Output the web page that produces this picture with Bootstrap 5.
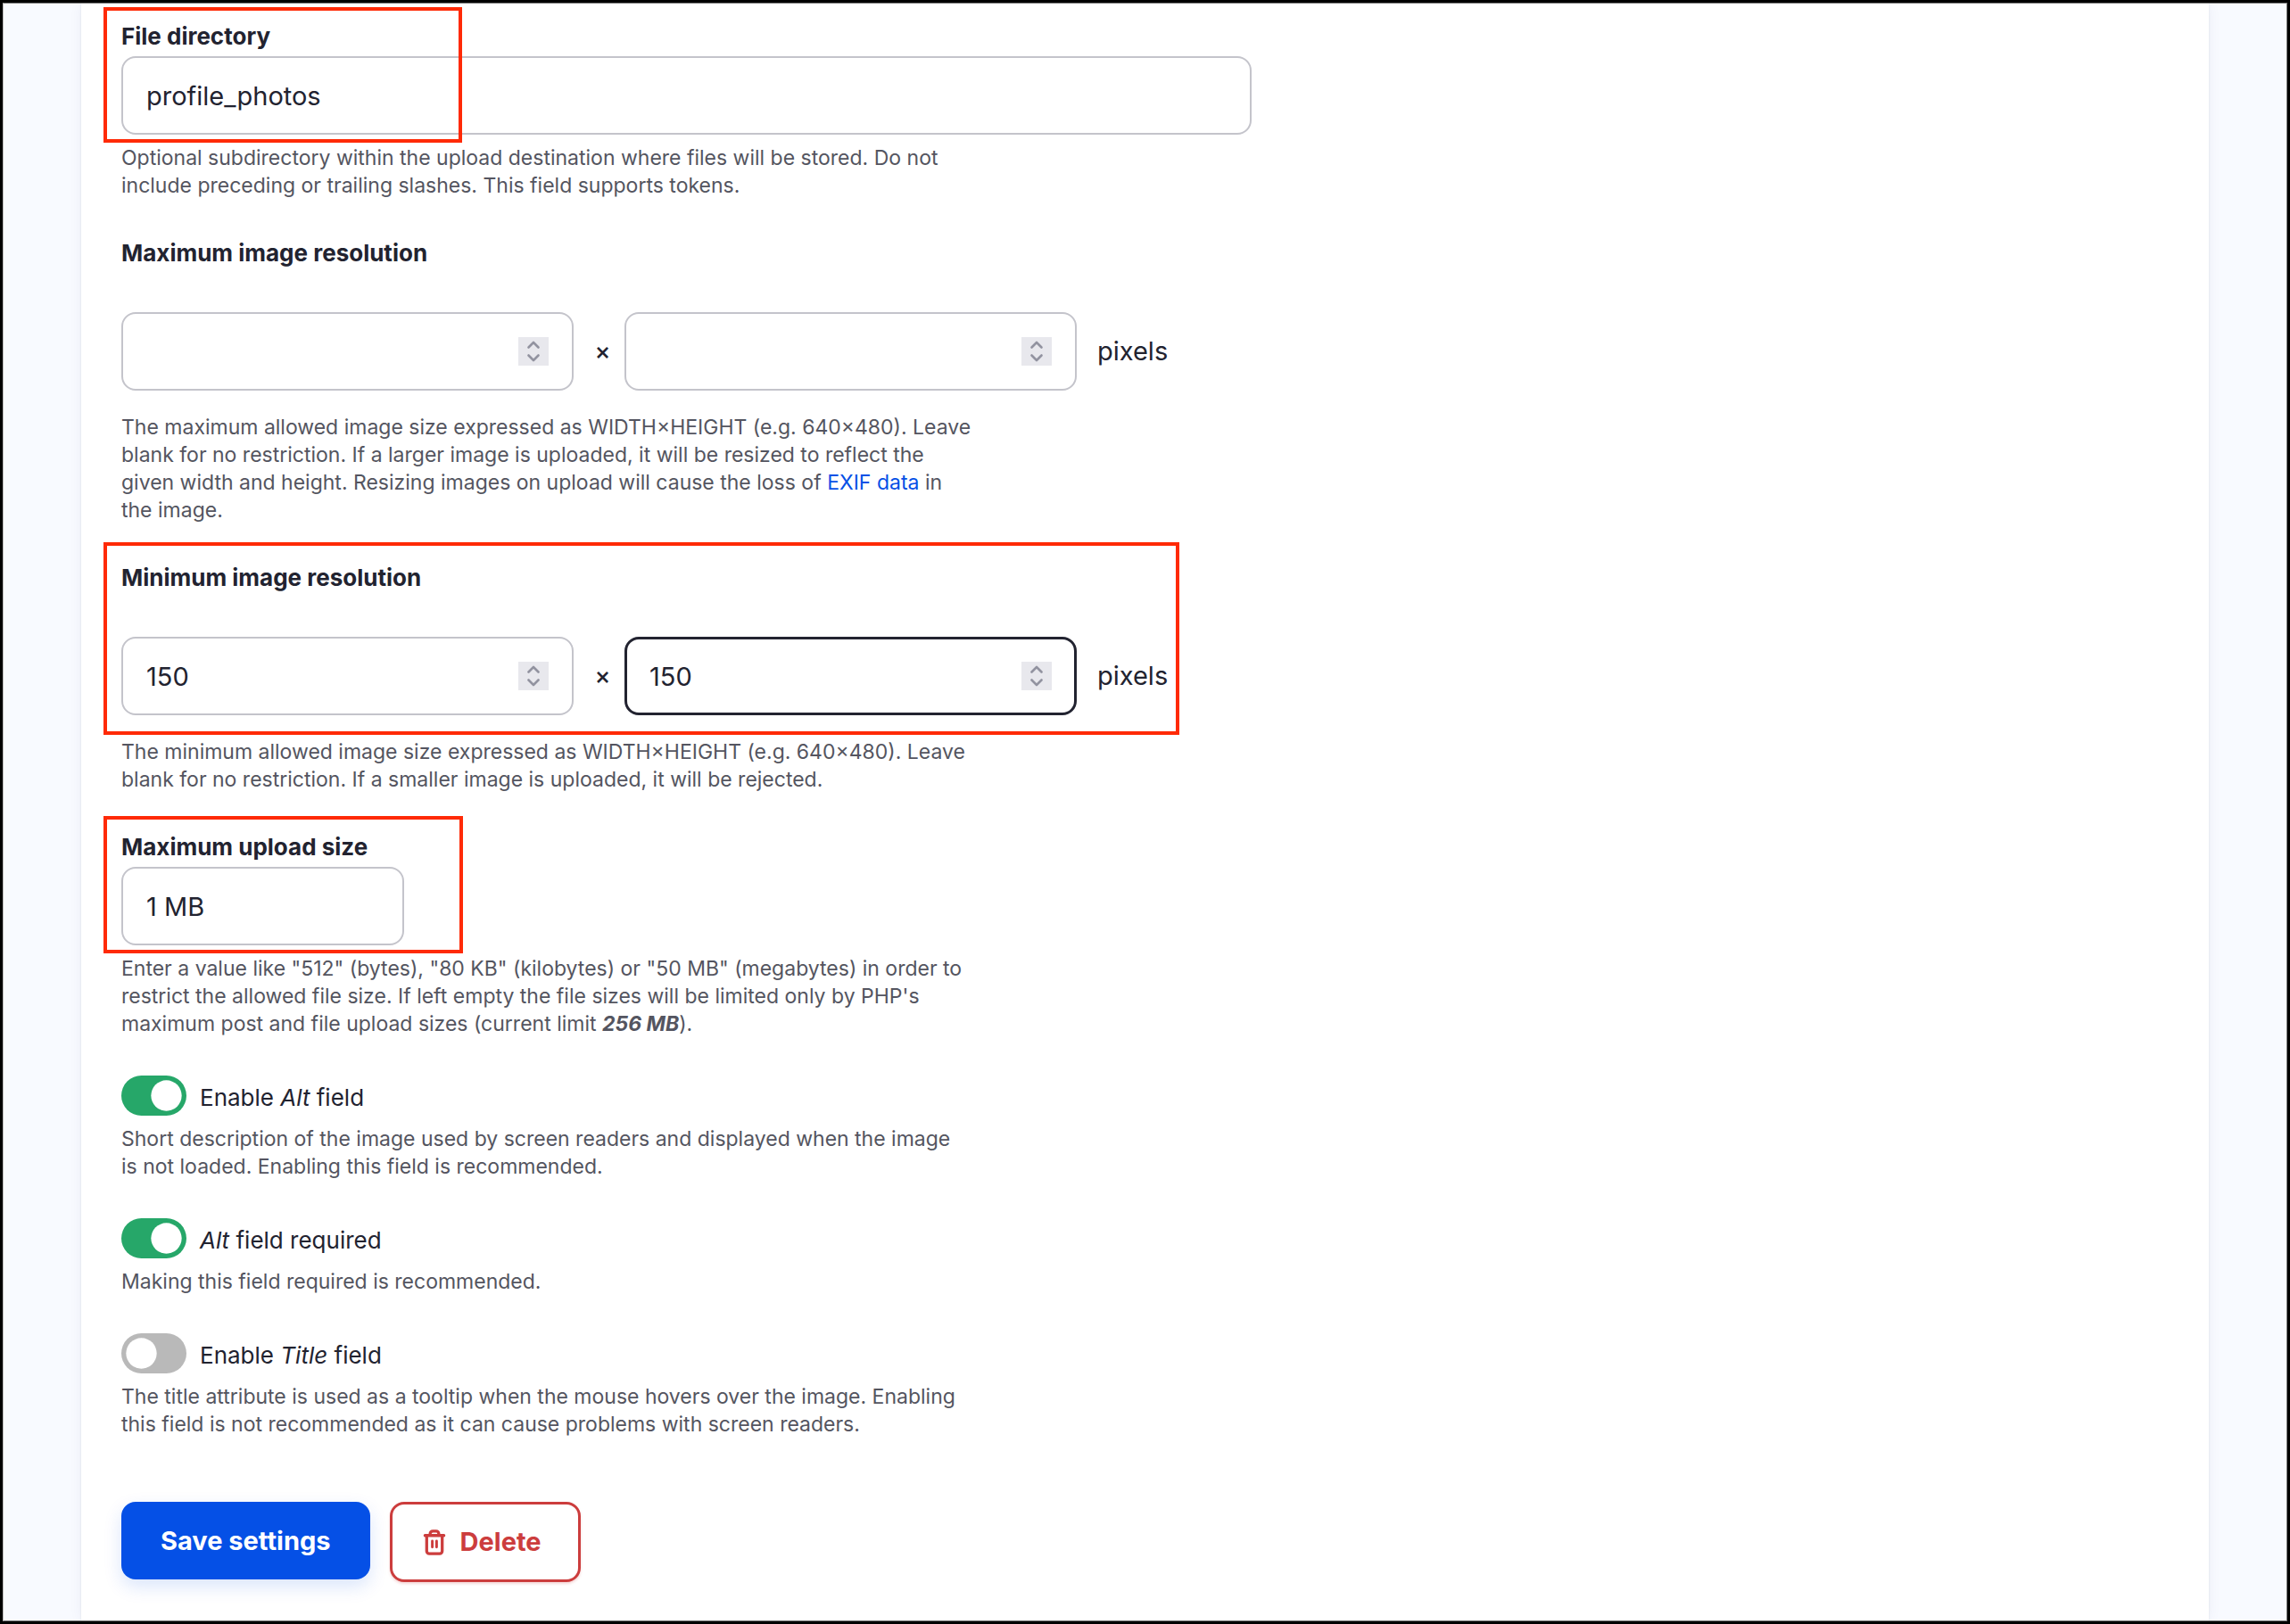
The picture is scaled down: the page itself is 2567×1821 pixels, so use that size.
<!DOCTYPE html>
<html lang="en">
<head>
<meta charset="utf-8">
<meta name="viewport" content="width=device-width, initial-scale=1">
<title>Image field settings</title>
<link href="https://cdn.jsdelivr.net/npm/bootstrap@5.3.0/dist/css/bootstrap.min.css" rel="stylesheet">
<style>
  :root { --ink: #222330; --muted: #545560; --line: #c4c4cb; --primary: #0550e6; --danger: #cc3d3d; }
  body { font-family: Inter, "Liberation Sans", sans-serif; color: var(--ink); background: #000; padding: 3px; }
  .page-frame { min-height: calc(100vh - 6px); background: #f8faff; border: 1px solid #777; border-left-color: #bbb; padding: 0 87px; overflow: hidden; }
  .panel { padding: 18px 45px 40px; background: #fff; box-shadow: 0 0 14px rgba(30, 40, 110, .06), 0 0 2px rgba(30, 40, 60, .1); }
  .field { margin-bottom: 41px; position: relative; }
  .field-switch { margin: 42px 0; }
  .field-title { display: block; font-size: 26px; line-height: 38px; font-weight: 700; margin: 0 0 3px; }
  .help { font-size: 23px; line-height: 31px; color: var(--muted); max-width: 957px; margin: 11px 0 0; }
  .field-switch .help { max-width: 944px; }
  .help a { color: var(--primary); text-decoration: none; }
  .field .form-control { height: 88px; border: 2px solid var(--line); border-radius: 16px; padding: 0 26px; font-size: 29px; color: var(--ink); box-shadow: none; background: #fff; }
  .field .form-control.is-current { border: 3px solid var(--ink); padding: 0 25px; }
  .input-long { max-width: 1267px; }
  .input-short { max-width: 317px; }
  .size-row { margin: 47px 0 26px; }
  .size-box { width: 507px; }
  .times { font-size: 27px; font-weight: 500; width: 57px; padding-left: 8px; }
  .unit { font-size: 29px; margin-left: 23px; }
  input[type=number] { appearance: textfield; }
  input[type=number]::-webkit-inner-spin-button { appearance: none; margin: 0; }
  .stepper { position: absolute; right: 28px; top: 28px; width: 34px; height: 32px; pointer-events: none; }
  .marker { position: absolute; left: -20px; border: 4px solid #ff2a06; pointer-events: none; }
  .marker-directory { top: -14px; width: 402px; height: 152px; }
  .marker-minimum { top: -21px; width: 1206px; height: 216px; }
  .marker-upload { top: -16px; width: 403px; height: 154px; }
  .form-switch { display: flex; align-items: center; gap: 15px; height: 45px; padding: 0; margin: 0 0 11px; }
  .form-switch .form-check-input { width: 73px; height: 45px; margin: 0; flex: none; border: 0; border-radius: 23px; box-shadow: none; background-color: #b9b9b9;
    background-image: url("data:image/svg+xml,%3csvg xmlns='http://www.w3.org/2000/svg' viewBox='-4 -4 8 8'%3e%3ccircle r='3.05' fill='%23fff'/%3e%3c/svg%3e"); }
  .form-switch .form-check-input:checked { background-color: #26a769;
    background-image: url("data:image/svg+xml,%3csvg xmlns='http://www.w3.org/2000/svg' viewBox='-4 -4 8 8'%3e%3ccircle r='3.05' fill='%23fff'/%3e%3c/svg%3e"); }
  .form-switch .form-check-label { font-size: 26px; line-height: 36px; padding-top: 4px; }
  .form-switch + .help { margin-top: 0; }
  .actions { margin-top: 71px; gap: 22px; }
  .actions .btn { font-size: 29px; line-height: 36px; font-weight: 700; border-radius: 16px; }
  .btn-save { background: var(--primary); color: #fff; border: 0; padding: 26px 44px 25px; box-shadow: 0 8px 20px rgba(5, 80, 230, .15); }
  .btn-remove { background: #fff; color: var(--danger); border: 3px solid var(--danger); padding: 24px 41px 24px 34px; box-shadow: 0 2px 3px rgba(204, 61, 61, .2); }
  .btn-remove svg { width: 26px; height: 29px; }
</style>
</head>
<body>
<svg class="d-none" aria-hidden="true">
  <symbol id="steps" viewBox="0 0 34 32">
    <path fill="#e8e8ed" d="M0 0h34v32H0z"/>
    <path fill="none" stroke="#9293a0" stroke-width="2.6" stroke-linecap="round" stroke-linejoin="round" d="M11.500 11.500 17 6l5.500 5.500M11.500 20.500 17 26l5.500-5.500"/>
  </symbol>
</svg>
<div class="page-frame d-flex">
  <main class="panel flex-grow-1">
    <form>
      <div class="field">
        <label class="field-title" for="directory">File directory</label>
        <input class="form-control input-long" id="directory" type="text" value="profile_photos">
        <p class="help">Optional subdirectory within the upload destination where files will be stored. Do not include preceding or trailing slashes. This field supports tokens.</p>
        <div class="marker marker-directory"></div>
      </div>

      <div class="field" role="group" aria-labelledby="max-title">
        <h4 class="field-title" id="max-title">Maximum image resolution</h4>
        <div class="size-row d-flex align-items-center">
          <div class="size-box position-relative">
            <input class="form-control" type="number" aria-label="Maximum width">
            <svg class="stepper"><use href="#steps"/></svg>
          </div>
          <span class="times text-center">×</span>
          <div class="size-box position-relative">
            <input class="form-control" type="number" aria-label="Maximum height">
            <svg class="stepper"><use href="#steps"/></svg>
          </div>
          <span class="unit">pixels</span>
        </div>
        <p class="help">The maximum allowed image size expressed as WIDTH×HEIGHT (e.g. 640×480). Leave blank for no restriction. If a larger image is uploaded, it will be resized to reflect the given width and height. Resizing images on upload will cause the loss of <a href="#">EXIF data</a> in the image.</p>
      </div>

      <div class="field" role="group" aria-labelledby="min-title">
        <h4 class="field-title" id="min-title">Minimum image resolution</h4>
        <div class="size-row d-flex align-items-center">
          <div class="size-box position-relative">
            <input class="form-control" type="number" value="150" aria-label="Minimum width">
            <svg class="stepper"><use href="#steps"/></svg>
          </div>
          <span class="times text-center">×</span>
          <div class="size-box position-relative">
            <input class="form-control is-current" type="number" value="150" aria-label="Minimum height">
            <svg class="stepper"><use href="#steps"/></svg>
          </div>
          <span class="unit">pixels</span>
        </div>
        <p class="help">The minimum allowed image size expressed as WIDTH×HEIGHT (e.g. 640×480). Leave blank for no restriction. If a smaller image is uploaded, it will be rejected.</p>
        <div class="marker marker-minimum"></div>
      </div>

      <div class="field">
        <label class="field-title" for="upload-size">Maximum upload size</label>
        <input class="form-control input-short" id="upload-size" type="text" value="1 MB">
        <p class="help">Enter a value like "512" (bytes), "80 KB" (kilobytes) or "50 MB" (megabytes) in order to restrict the allowed file size. If left empty the file sizes will be limited only by PHP's maximum post and file upload sizes (current limit <em class="fw-bold">256 MB</em>).</p>
        <div class="marker marker-upload"></div>
      </div>

      <div class="field-switch">
        <div class="form-check form-switch">
          <input class="form-check-input" type="checkbox" role="switch" id="alt-on" checked>
          <label class="form-check-label" for="alt-on">Enable <em>Alt</em> field</label>
        </div>
        <p class="help">Short description of the image used by screen readers and displayed when the image is not loaded. Enabling this field is recommended.</p>
      </div>

      <div class="field-switch">
        <div class="form-check form-switch">
          <input class="form-check-input" type="checkbox" role="switch" id="alt-required" checked>
          <label class="form-check-label" for="alt-required"><em>Alt</em> field required</label>
        </div>
        <p class="help">Making this field required is recommended.</p>
      </div>

      <div class="field-switch">
        <div class="form-check form-switch">
          <input class="form-check-input" type="checkbox" role="switch" id="title-on">
          <label class="form-check-label" for="title-on">Enable <em>Title</em> field</label>
        </div>
        <p class="help">The title attribute is used as a tooltip when the mouse hovers over the image. Enabling this field is not recommended as it can cause problems with screen readers.</p>
      </div>

      <div class="actions d-flex align-items-start">
        <button class="btn btn-save" type="submit">Save settings</button>
        <button class="btn btn-remove d-flex align-items-center gap-3" type="button">
          <svg viewBox="0 0 26 30" fill="none" stroke="currentColor" stroke-width="3.4" stroke-linecap="round" stroke-linejoin="round" aria-hidden="true">
            <path d="M2 7h22M8 7V5a3 3 0 0 1 3-3h4a3 3 0 0 1 3 3v2M4 7v18a3 3 0 0 0 3 3h12a3 3 0 0 0 3-3V7"/>
            <path stroke-width="3" d="M10.500 13.500v7M15.500 13.500v7"/>
          </svg>
          Delete
        </button>
      </div>
    </form>
  </main>
</div>
<script src="https://cdn.jsdelivr.net/npm/bootstrap@5.3.0/dist/js/bootstrap.bundle.min.js"></script>
</body>
</html>
